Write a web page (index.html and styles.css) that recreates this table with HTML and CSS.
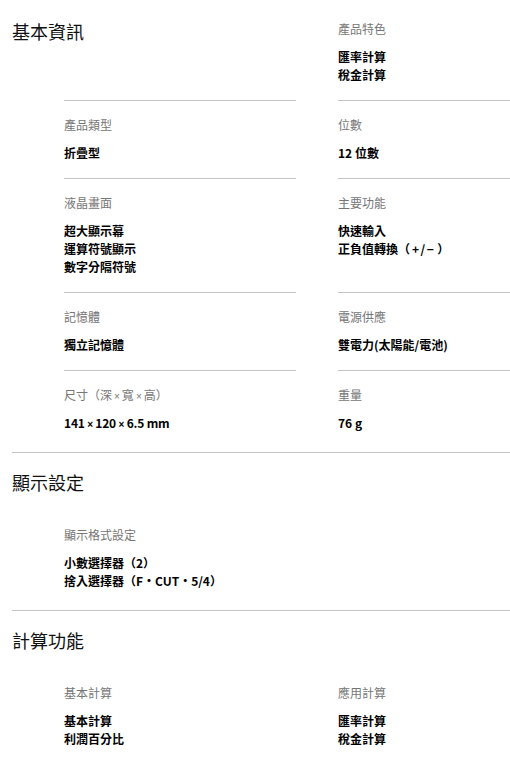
FILE: index.html
```html
<!DOCTYPE html>
<html lang="zh-Hant">
<head>
<meta charset="utf-8">
<title>規格</title>
<link rel="stylesheet" href="styles.css">
</head>
<body>
<main class="spec">
  <section class="sec sec-first">
    <div class="grid">
      <div class="cell first-row"><h2 class="sec-title inline-title">基本資訊</h2></div>
      <div class="cell first-row">
        <p class="label">產品特色</p>
        <ul class="values"><li>匯率計算</li><li>稅金計算</li></ul>
      </div>
      <div class="cell">
        <p class="label">產品類型</p>
        <ul class="values"><li>折疊型</li></ul>
      </div>
      <div class="cell">
        <p class="label">位數</p>
        <ul class="values"><li>12 位數</li></ul>
      </div>
      <div class="cell">
        <p class="label">液晶畫面</p>
        <ul class="values"><li>超大顯示幕</li><li>運算符號顯示</li><li>數字分隔符號</li></ul>
      </div>
      <div class="cell">
        <p class="label">主要功能</p>
        <ul class="values"><li>快速輸入</li><li>正負值轉換（<span class="sym">+/−</span>）</li></ul>
      </div>
      <div class="cell">
        <p class="label">記憶體</p>
        <ul class="values"><li>獨立記憶體</li></ul>
      </div>
      <div class="cell">
        <p class="label">電源供應</p>
        <ul class="values"><li>雙電力(太陽能/電池)</li></ul>
      </div>
      <div class="cell last-row">
        <p class="label">尺寸（深<span class="x lx">×</span>寬<span class="x lx">×</span>高）</p>
        <ul class="values"><li class="num">141 <span class="x">×</span> 120 <span class="x">×</span> 6.5 mm</li></ul>
      </div>
      <div class="cell last-row">
        <p class="label">重量</p>
        <ul class="values"><li>76 g</li></ul>
      </div>
    </div>
  </section>

  <section class="sec">
    <h2 class="sec-title">顯示設定</h2>
    <div class="grid">
      <div class="cell last-row">
        <p class="label">顯示格式設定</p>
        <ul class="values"><li>小數選擇器（2）</li><li>捨入選擇器（F・CUT・5/4）</li></ul>
      </div>
    </div>
  </section>

  <section class="sec">
    <h2 class="sec-title">計算功能</h2>
    <div class="grid">
      <div class="cell last-row">
        <p class="label">基本計算</p>
        <ul class="values"><li>基本計算</li><li>利潤百分比</li></ul>
      </div>
      <div class="cell last-row">
        <p class="label">應用計算</p>
        <ul class="values"><li>匯率計算</li><li>稅金計算</li></ul>
      </div>
    </div>
  </section>
</main>
</body>
</html>
```

FILE: styles.css
```css
html, body {
  margin: 0;
  padding: 0;
  background: #ffffff;
}

body {
  font-family: "Noto Sans CJK TC", "Noto Sans", sans-serif;
  color: #000000;
}

.spec {
  display: flex;
  flex-direction: column;
}

.sec {
  margin-left: 12px;
  padding: 16px 0 4px;
  border-bottom: 1px solid #c4c4c4;
}

.sec:last-child {
  border-bottom: none;
}

.sec-first {
  padding-top: 0;
}

.sec-title {
  margin: 0;
  font-size: 18px;
  font-weight: 400;
  line-height: 26px;
  color: #111111;
  white-space: nowrap;
}

.inline-title {
  margin: -2px 0 0 -52px;
}

.grid {
  display: grid;
  grid-template-columns: 232px 1fr;
  column-gap: 42px;
  margin-left: 52px;
  margin-top: 16px;
}

.sec-first .grid {
  margin-top: 0;
}

.cell {
  padding: 15px 0 16px;
  border-bottom: 1px solid #c4c4c4;
}

.cell.first-row {
  padding-top: 20px;
}

.cell.last-row {
  border-bottom: none;
}

.label {
  margin: 0;
  height: 18px;
  font-size: 12px;
  line-height: 18px;
  color: #767676;
  white-space: nowrap;
}

.values {
  list-style: none;
  margin: 10px 0 0;
  padding: 0;
  font-size: 12px;
  line-height: 18px;
  font-weight: 700;
  color: #000000;
}

.values li {
  margin: 0;
  height: 18px;
  white-space: nowrap;
}

.x {
  font-family: "Liberation Sans", sans-serif;
  font-size: 10px;
  line-height: 1;
}

.lx {
  padding: 0 2px;
}

.num {
  letter-spacing: -0.2px;
}

.sym {
  padding: 0 2px;
  letter-spacing: 1.5px;
}
```
